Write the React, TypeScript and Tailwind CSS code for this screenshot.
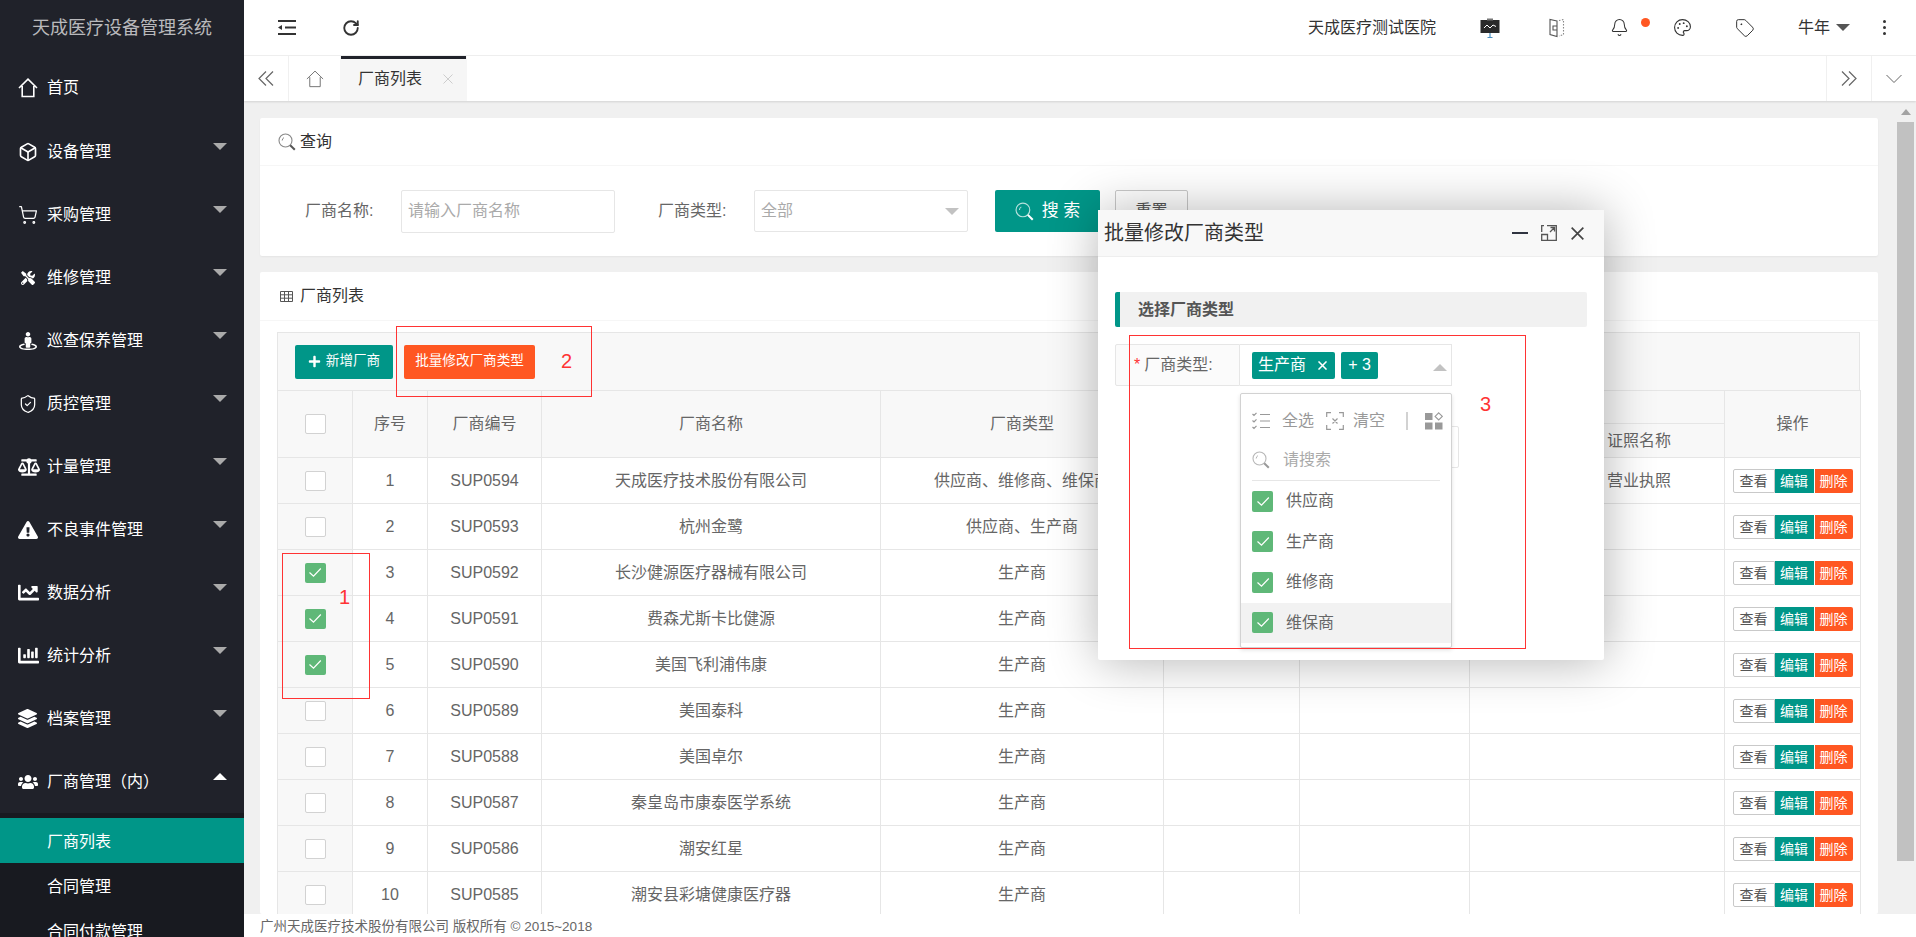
import React from "react";
import { Box, ShoppingCart, ShieldCheck, RotateCw, Bell, Palette, Tag } from "lucide-react";
import { FaStreetView, FaBalanceScale, FaExclamationTriangle, FaChartLine, FaChartBar, FaLayerGroup, FaUsers, FaTools, FaPlus } from "react-icons/fa";

const Caret = ({ up = false, cls = "" }: { up?: boolean; cls?: string }) => (
  <svg width="14" height="7" viewBox="0 0 14 7" className={cls}>
    <path d={up ? "M7 0L14 7H0Z" : "M0 0H14L7 7Z"} fill="currentColor" />
  </svg>
);

const Lens = ({ size = 18, cls = "" }: { size?: number; cls?: string }) => (
  <svg width={size} height={size} viewBox="0 0 18 18" fill="none" className={cls}>
    <circle cx="7.5" cy="7.5" r="6.5" stroke="currentColor" strokeOpacity="0.7" strokeWidth="1.1" />
    <path d="M4.2 7.5A3.3 3.3 0 0 1 6 4.6" stroke="currentColor" strokeOpacity="0.7" strokeWidth="1" />
    <path d="M12.2 12.2L16.8 16.8" stroke="currentColor" strokeWidth="2" />
  </svg>
);

const Home = ({ size = 20, sw = 1.4, cls = "" }: { size?: number; sw?: number; cls?: string }) => (
  <svg width={size} height={size} viewBox="0 0 20 20" fill="none" className={cls}>
    <path d="M1 10L10 1.2L19 10M4.2 8V18.5H15.8V8" stroke="currentColor" strokeWidth={sw} />
  </svg>
);

const Cross = ({ size = 14, sw = 1, cls = "" }: { size?: number; sw?: number; cls?: string }) => (
  <svg width={size} height={size} viewBox="0 0 14 14" fill="none" className={cls}>
    <path d="M.7 .7L13.3 13.3M13.3 .7L.7 13.3" stroke="currentColor" strokeWidth={sw} />
  </svg>
);

const Double = ({ right = false }: { right?: boolean }) => (
  <svg width="16" height="15" viewBox="0 0 16 15" fill="none">
    <path d={right ? "M1 .5L8 7.5L1 14.5M8 .5L15 7.5L8 14.5" : "M15 .5L8 7.5L15 14.5M8 .5L1 7.5L8 14.5"} stroke="#666" strokeWidth="1.2" />
  </svg>
);

const Check = ({ on, tall = false }: { on: boolean; tall?: boolean }) =>
  on ? (
    <span className={`flex ${tall ? "h-[21px]" : "h-[20px]"} w-[21px] items-center justify-center rounded-[2px] bg-[#5fb878]`}>
      <svg width="14" height="11" viewBox="0 0 14 11" fill="none">
        <path d="M1.5 5.5L5.5 9.2L12.8 1.5" stroke="#fff" strokeWidth="1.2" />
      </svg>
    </span>
  ) : (
    <span className="block h-[20px] w-[21px] rounded-[2px] border border-[#d2d2d2] bg-white" />
  );

const nav: [React.ReactNode, string][] = [
  [<Home size={20} sw={1.6} />, "首页"],
  [<Box size={20} strokeWidth={2} />, "设备管理"],
  [<ShoppingCart size={20} strokeWidth={1.5} />, "采购管理"],
  [<FaTools size={14} className="mx-[3px]" />, "维修管理"],
  [<FaStreetView size={18} className="mx-[1px]" />, "巡查保养管理"],
  [<ShieldCheck size={20} strokeWidth={1.5} />, "质控管理"],
  [<FaBalanceScale size={22} />, "计量管理"],
  [<FaExclamationTriangle size={20} />, "不良事件管理"],
  [<FaChartLine size={21} />, "数据分析"],
  [<FaChartBar size={21} />, "统计分析"],
  [<FaLayerGroup size={19} />, "档案管理"],
  [<FaUsers size={20} />, "厂商管理（内）"],
];

const rows: [string, string][] = [
  ["天成医疗技术股份有限公司", "供应商、维修商、维保商"],
  ["杭州金鹭", "供应商、生产商"],
  ["长沙健源医疗器械有限公司", "生产商"],
  ["费森尤斯卡比健源", "生产商"],
  ["美国飞利浦伟康", "生产商"],
  ["美国泰科", "生产商"],
  ["美国卓尔", "生产商"],
  ["秦皇岛市康泰医学系统", "生产商"],
  ["潮安红星", "生产商"],
  ["潮安县彩塘健康医疗器", "生产商"],
];

const Sidebar = () => (
  <aside className="flex h-full w-[244px] shrink-0 flex-col overflow-hidden bg-[#20222a] text-white">
    <div className="flex h-[57px] shrink-0 items-center justify-center text-[18px] text-white/70">天成医疗设备管理系统</div>
    {nav.map(([icon, label], i) => (
      <div key={label} className={`flex h-[63px] shrink-0 items-center pl-[18px] pr-[17px] text-[16px] ${i === 0 ? "pb-[2px]" : ""}`}>
        <span className="flex w-[29px] shrink-0 items-center">{icon}</span>
        <span className="flex-1 whitespace-nowrap">{label}</span>
        {i > 0 && <Caret up={i === 11} cls={i === 11 ? "mb-[11px] text-white" : "mb-[11px] text-[#aaaaaa]"} />}
      </div>
    ))}
    <div className="flex-1 bg-[#181a20] pt-[5px] text-[16px]">
      <div className="flex h-[45px] items-center bg-[#009688] pl-[47px] pt-[2px]">厂商列表</div>
      <div className="flex h-[45px] items-center pl-[47px] pt-[2px]">合同管理</div>
      <div className="flex h-[45px] items-center pl-[47px] pt-[2px]">合同付款管理</div>
    </div>
  </aside>
);

const Header = () => (
  <header className="flex h-[56px] shrink-0 items-center border-b border-[#f0f0f0] bg-white pl-[34px] text-[#333]">
    <svg width="18" height="15" viewBox="0 0 18 15" fill="none">
      <path d="M0 1H18M7 7.5H18M0 14H18" stroke="#333" strokeWidth="2" />
      <path d="M0 7.5L4 5V10Z" fill="#333" />
    </svg>
    <RotateCw size={18} strokeWidth={2.5} className="ml-[46px]" />
    <div className="flex-1" />
    <span className="text-[16px]">天成医疗测试医院</span>
    <svg width="20" height="20" viewBox="0 0 20 20" className="ml-[44px]">
      <rect x="0.5" y="2" width="19" height="13" fill="#2a2a2a" />
      <rect x="7" y="0.5" width="6" height="2" fill="#777" />
      <path d="M4 10L7 7L10 10L13 7L16 8.5" stroke="#fff" strokeWidth="1" fill="none" />
      <path d="M10 15V19.5M7.5 19.5H12.5" stroke="#4a90c2" strokeWidth="1.2" />
    </svg>
    <svg width="16" height="20" viewBox="0 0 16 20" fill="none" className="ml-[49px]">
      <path d="M8 3L1 1.5V16.5L8 18.5ZM4 8H8V12H4Z" stroke="#555" strokeWidth="1.1" />
      <path d="M10 2.5L14.5 1.5V16.5L10 18" stroke="#888" strokeWidth="1.1" strokeDasharray="1.5 1.5" />
    </svg>
    <span className="relative ml-[45px] flex">
      <Bell size={19} strokeWidth={1.3} />
      <span className="absolute left-[31px] top-[0px] h-[9px] w-[9px] rounded-full bg-[#ff5722]" />
    </span>
    <Palette size={19} strokeWidth={1.4} className="ml-[44px]" />
    <Tag size={20} strokeWidth={1.2} className="ml-[43px]" />
    <span className="ml-[43px] text-[16px]">牛年</span>
    <Caret cls="ml-[6px] text-[#555]" />
    <span className="ml-[33px] mr-[30px] flex flex-col gap-[3px]">
      <i className="block h-[3px] w-[3px] rounded-full bg-[#333]" />
      <i className="block h-[3px] w-[3px] rounded-full bg-[#333]" />
      <i className="block h-[3px] w-[3px] rounded-full bg-[#333]" />
    </span>
  </header>
);

const Tabs = () => (
  <div className="relative z-10 flex h-[45px] shrink-0 items-stretch bg-white text-[#666] shadow-[0_1px_2px_rgba(0,0,0,0.12)]">
    <div className="flex w-[45px] items-center justify-center border-r border-[#f0f0f0]"><Double /></div>
    <div className="flex w-[51px] items-center justify-center"><Home size={18} sw={1} /></div>
    <div className="flex w-[127px] flex-col bg-[#f6f6f6]">
      <div className="mx-[1px] h-[3px] bg-[#20222a]" />
      <div className="flex flex-1 items-center pb-[3px] pl-[18px] text-[16px] text-[#333]">
        厂商列表
        <Cross size={10} cls="ml-[21px] text-[#bbb]" />
      </div>
    </div>
    <div className="flex-1" />
    <div className="flex w-[45px] items-center justify-center border-l border-[#f0f0f0]"><Double right /></div>
    <div className="flex w-[45px] items-center justify-center border-l border-[#f0f0f0]">
      <svg width="16" height="10" viewBox="0 0 16 10" fill="none"><path d="M.5 1L8 8.5L15.5 1" stroke="#666" strokeWidth="1" /></svg>
    </div>
  </div>
);

const Query = () => (
  <section className="h-[138px] shrink-0 rounded-[2px] bg-white shadow-[0_1px_2px_rgba(0,0,0,0.05)]">
    <div className="flex h-[48px] items-center border-b border-[#f6f6f6] pl-[18px] text-[16px] text-[#333]">
      <Lens cls="mr-[4px] text-[#555]" />查询
    </div>
    <div className="flex h-[90px] items-center pl-[45px] text-[16px] text-[#666]">
      <span className="w-[71px] whitespace-nowrap">厂商名称:</span>
      <div className="ml-[25px] flex h-[43px] w-[214px] items-center rounded-[2px] border border-[#e6e6e6] pl-[6px] text-[#aaa]">请输入厂商名称</div>
      <span className="ml-[43px] w-[72px] whitespace-nowrap">厂商类型:</span>
      <div className="ml-[24px] flex h-[42px] w-[214px] items-center justify-between rounded-[2px] border border-[#e6e6e6] px-[6px] text-[#aaa]">
        全部<Caret cls="mr-[2px] text-[#c2c2c2]" />
      </div>
      <div className="ml-[27px] flex h-[42px] w-[105px] items-center justify-center gap-[8px] rounded-[2px] bg-[#009688] text-[17px] text-white">
        <Lens size={19} />搜 索
      </div>
      <div className="ml-[15px] flex h-[42px] w-[73px] items-center justify-center rounded-[2px] border border-[#c9c9c9] bg-white text-[#555]">重置</div>
    </div>
  </section>
);

const th = "border border-[#e6e6e6] bg-[#f8f8f8] font-normal text-[#666] text-[16px]";
const td = "h-[46px] border border-[#e6e6e6] text-center text-[16px] text-[#666] whitespace-nowrap overflow-hidden";

const Table = () => (
  <table className="w-[1583px] table-fixed border-collapse">
    <colgroup>
      <col className="w-[75px]" />
      <col className="w-[75px]" />
      <col className="w-[114px]" />
      <col className="w-[339px]" />
      <col className="w-[283px]" />
      <col className="w-[136px]" />
      <col className="w-[170px]" />
      <col className="w-[255px]" />
      <col className="w-[136px]" />
    </colgroup>
    <thead>
      <tr className="h-[33px]">
        <th rowSpan={2} className={th}><span className="flex justify-center"><Check on={false} /></span></th>
        <th rowSpan={2} className={th}>序号</th>
        <th rowSpan={2} className={th}>厂商编号</th>
        <th rowSpan={2} className={th}>厂商名称</th>
        <th rowSpan={2} className={th}>厂商类型</th>
        <th colSpan={3} className={th} />
        <th rowSpan={2} className={th}>操作</th>
      </tr>
      <tr className="h-[34px]">
        <th className={th} />
        <th className={th} />
        <th className={`${th} pl-[137px] text-left`}>证照名称</th>
      </tr>
    </thead>
    <tbody>
      {rows.map(([name, type], i) => (
        <tr key={name}>
          <td className={`${td} bg-[#f8f8f8]`}><span className="flex justify-center"><Check on={i >= 2 && i <= 4} /></span></td>
          <td className={td}>{i + 1}</td>
          <td className={td}>SUP0{594 - i}</td>
          <td className={td}>{name}</td>
          <td className={td}>{type}</td>
          <td className={td} />
          <td className={td} />
          <td className={`${td} pl-[137px] text-left`}>{i === 0 ? "营业执照" : ""}</td>
          <td className={`${td} shadow-[-4px_0_8px_rgba(0,0,0,0.07)]`}>
            <span className="flex justify-center text-[14px] leading-[24px]">
              <span className="h-[24px] w-[42px] rounded-l-[2px] border border-[#c9c9c9] bg-white leading-[22px] text-[#555]">查看</span>
              <span className="h-[24px] w-[39px] bg-[#009688] text-white">编辑</span>
              <span className="ml-[1px] h-[24px] w-[38px] rounded-r-[2px] bg-[#ff5722] text-white">删除</span>
            </span>
          </td>
        </tr>
      ))}
    </tbody>
  </table>
);

const ListCard = () => (
  <section className="mt-[16px] flex-1 overflow-hidden rounded-[2px] bg-white">
    <div className="flex h-[49px] items-center border-b border-[#f6f6f6] pl-[20px] text-[16px] text-[#333]">
      <svg width="13" height="11" viewBox="0 0 13 11" fill="none" className="mr-[7px]">
        <path d="M.5.5H12.5V10.5H.5ZM.5 3.8H12.5M.5 7.2H12.5M4.5.5V10.5M8.5.5V10.5" stroke="#555" strokeWidth="1" />
      </svg>
      厂商列表
    </div>
    <div className="ml-[17px] mt-[11px] w-[1583px]">
      <div className="flex h-[58px] items-center gap-[11px] border border-b-0 border-[#e6e6e6] bg-[#f8f8f8] pl-[17px] text-[13.6px] text-white">
        <div className="flex h-[34px] w-[98px] items-center justify-center gap-[5px] rounded-[2px] bg-[#009688]">
          <FaPlus size={13} />新增厂商
        </div>
        <div className="flex h-[34px] w-[131px] items-center justify-center rounded-[2px] bg-[#ff5722]">批量修改厂商类型</div>
      </div>
      <Table />
    </div>
  </section>
);

const Modal = () => (
  <div className="absolute left-[1098px] top-[210px] z-30 h-[450px] w-[506px] rounded-[2px] bg-white shadow-[1px_1px_50px_rgba(0,0,0,0.3)]">
    <div className="flex h-[47px] items-center border-b border-[#eeeeee] bg-[#f8f8f8] pl-[6px] pr-[20px] text-[20px] text-[#333]">
      <span className="flex-1">批量修改厂商类型</span>
      <span className="h-[2px] w-[16px] bg-[#2f3440]" />
      <svg width="16" height="16" viewBox="0 0 16 16" fill="none" className="ml-[13px]">
        <path d="M6 .7H15.3V15.3H6.5M.7 9.5H6.5V15.3H.7ZM.7 7V.7H3M9 7L13.5 2.5M9.5 2.5H13.5V6.5" stroke="#555" strokeWidth="1.3" />
      </svg>
      <Cross size={13} sw={1.8} cls="ml-[14px] text-[#444]" />
    </div>
    <div className="px-[17px] pt-[35px]">
      <div className="flex h-[35px] items-center rounded-[2px] border-l-[5px] border-[#009688] bg-[#f1f1f1] pl-[18px] text-[16px] font-bold text-[#555]">选择厂商类型</div>
      <div className="relative mt-[17px] flex h-[42px] w-[337px] text-[16px]">
        <div className="flex w-[125px] items-center rounded-l-[2px] border border-[#e6e6e6] bg-[#fbfbfb] pl-[18px] text-[#666]">
          <span className="mr-[4px] text-[#ff3333]">*</span>厂商类型:
        </div>
        <div className="flex w-[212px] items-center gap-[6px] border border-l-0 border-[#e6e6e6] bg-white pl-[12px] text-white">
          <span className="flex h-[27px] w-[83px] items-center justify-between rounded-[2px] bg-[#009688] pl-[6px] pr-[8px]">生产商<Cross size={9} sw={2.4} /></span>
          <span className="flex h-[27px] w-[37px] items-center justify-center rounded-[2px] bg-[#009688]">+ 3</span>
          <Caret up cls="ml-[49px] mt-[4px] text-[#c2c2c2]" />
        </div>
        <div className="absolute left-[125px] top-[82px] h-[42px] w-[219px] rounded-[2px] border border-[#e6e6e6] bg-white" />
        <div className="absolute left-[125px] top-[49px] h-[255px] w-[212px] rounded-[2px] border border-[#d2d2d2] bg-white pt-[15px] shadow-[0_2px_4px_rgba(0,0,0,0.12)]">
          <div className="flex h-[24px] items-center pl-[11px] text-[#999]">
            <svg width="18" height="18" viewBox="0 0 18 18" fill="none">
              <path d="M.5 2L2 3.5L4.5 .8M.5 8.5L2 10L4.5 7.3M.5 15L2 16.5L4.5 13.8M8 2.5H18M8 9H18M8 15.5H18" stroke="#999" strokeWidth="1.2" />
            </svg>
            <span className="ml-[12px]">全选</span>
            <svg width="18" height="18" viewBox="0 0 18 18" fill="none" className="ml-[12px]">
              <path d="M.7 5V.7H5M13 .7H17.3V5M17.3 13V17.3H13M5 17.3H.7V13M6.5 6.5L11.5 11.5M11.5 6.5L6.5 11.5" stroke="#999" strokeWidth="1.2" />
            </svg>
            <span className="ml-[9px]">清空</span>
            <span className="ml-[21px] h-[18px] w-[2px] bg-[#d2d2d2]" />
            <svg width="18" height="18" viewBox="0 0 18 18" className="ml-[17px]">
              <path d="M0 1H7.5V8H0ZM0 10.5H7.5V17.5H0ZM10 10.5H17.5V17.5H10Z" fill="#999" />
              <path d="M13.7 .8L17.3 4.4L13.7 8L10.1 4.4Z" fill="none" stroke="#999" strokeWidth="1.1" />
            </svg>
          </div>
          <div className="mx-[11px] flex h-[48px] items-center border-b border-[#e6e6e6] pt-[6px] text-[#aaa]">
            <Lens cls="text-[#999]" /><span className="ml-[13px]">请搜索</span>
          </div>
          {["供应商", "生产商", "维修商", "维保商"].map((o, i) => (
            <div key={o} className={`flex h-[40.5px] items-center pl-[11px] text-[#666] ${i === 3 ? "bg-[#f2f2f2]" : ""}`}>
              <Check on={true} tall /><span className="ml-[13px]">{o}</span>
            </div>
          ))}
        </div>
      </div>
    </div>
  </div>
);

const Notes = () => (
  <>
    <div className="absolute left-[282px] top-[553px] z-20 h-[146px] w-[88px] border border-[#f33]" />
    <span className="absolute left-[339px] top-[584px] z-20 text-[20px] leading-[26px] text-[#f33]">1</span>
    <div className="absolute left-[396px] top-[326px] z-20 h-[71px] w-[196px] border border-[#f33]" />
    <span className="absolute left-[561px] top-[348px] z-20 text-[20px] leading-[26px] text-[#f33]">2</span>
    <div className="absolute left-[1129px] top-[335px] z-40 h-[314px] w-[397px] border border-[#f33]" />
    <span className="absolute left-[1480px] top-[391px] z-40 text-[20px] leading-[26px] text-[#f33]">3</span>
  </>
);

export default function App() {
  return (
    <div className="relative flex h-[937px] w-[1916px] overflow-hidden bg-[#f0f0f0] font-['Liberation_Sans','Noto_Sans_CJK_SC',sans-serif]">
      <Sidebar />
      <main className="flex min-w-0 flex-1 flex-col">
        <Header />
        <Tabs />
        <div className="flex min-h-0 flex-1">
          <div className="flex min-w-0 flex-1 flex-col pl-[16px] pr-[19px] pt-[17px]">
            <Query />
            <ListCard />
          </div>
          <div className="flex w-[19px] shrink-0 flex-col pr-[2px]">
            <div className="flex h-[21px] items-center justify-center">
              <svg width="10" height="6" viewBox="0 0 10 6"><path d="M5 0L10 6H0Z" fill="#a3a3a3" /></svg>
            </div>
            <div className="h-[739px] bg-[#c1c1c1]" />
          </div>
        </div>
        <footer className="relative z-10 flex h-[23px] shrink-0 items-center bg-white pl-[16px] pt-[4px] text-[13.5px] text-[#666]">广州天成医疗技术股份有限公司 版权所有 © 2015~2018</footer>
      </main>
      <Notes />
      <Modal />
    </div>
  );
}
